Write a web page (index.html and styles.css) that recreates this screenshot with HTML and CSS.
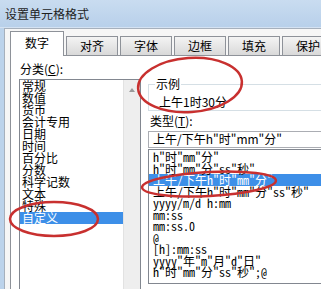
FILE: index.html
```html
<!DOCTYPE html>
<html lang="zh-CN">
<head>
	<meta charset="UTF-8">
	<title>设置单元格格式</title>
	<link rel="stylesheet" href="styles.css">
</head>
<body>
	<div class="window">
		<div class="titlebar">设置单元格格式</div>

		<div class="frame">
			<div class="tabs">
				<div class="tab active">数字</div>
				<div class="tab">对齐</div>
				<div class="tab">字体</div>
				<div class="tab">边框</div>
				<div class="tab">填充</div>
				<div class="tab">保护</div>
			</div>

			<div class="panel">
				<div class="left">
					<div class="label">分类(<span class="key">C</span>):</div>
					<div class="catlist">
						<ul class="cats">
							<li>常规</li>
							<li>数值</li>
							<li>货币</li>
							<li>会计专用</li>
							<li>日期</li>
							<li>时间</li>
							<li>百分比</li>
							<li>分数</li>
							<li>科学记数</li>
							<li>文本</li>
							<li>特殊</li>
							<li class="selected">自定义</li>
						</ul>
						<div class="scrollbar"><span class="arrow"></span></div>
					</div>
				</div>

				<div class="right">
					<fieldset class="sample">
						<legend>示例</legend>
						<div class="sample-value">上午1时30分</div>
					</fieldset>
					<div class="label type-label">类型(<span class="key">T</span>):</div>
					<div class="typebox">上午/下午h"时"mm"分"</div>
					<ul class="types">
						<li>h"时"mm"分"</li>
						<li>h"时"mm"分"ss"秒"</li>
						<li class="selected">上午/下午h"时"mm"分"</li>
						<li>上午/下午h"时"mm"分"ss"秒"</li>
						<li>yyyy/m/d h:mm</li>
						<li>mm:ss</li>
						<li>mm:ss.0</li>
						<li>@</li>
						<li>[h]:mm:ss</li>
						<li>yyyy"年"m"月"d"日"</li>
						<li>h"时"mm"分"ss"秒";@</li>
					</ul>
				</div>
			</div>
		</div>

		<!-- red marks drawn over the screenshot -->
		<svg class="marks" width="321" height="289" viewBox="0 0 321 289">
			<ellipse cx="190" cy="85" rx="52" ry="27" transform="rotate(-4 190 85)"/>
			<ellipse cx="209" cy="184" rx="67" ry="12" transform="rotate(-3 209 184)"/>
			<ellipse cx="54" cy="219" rx="44" ry="17"/>
		</svg>
	</div>
</body>
</html>
```

FILE: styles.css
```css
html, body, div, span, ul, li, fieldset, legend {
	margin: 0;
	padding: 0;
	border: 0;
}
ul {
	list-style: none;
}
body {
	background: #ffffff;
	font-family: "Noto Sans CJK SC", "Liberation Sans", sans-serif;
	font-size: 12px;
	color: #000;
}

.window {
	position: relative;
	width: 321px;
	height: 289px;
	overflow: hidden;
	background: #bcd3eb;
}

.titlebar {
	height: 27px;
	line-height: 28px;
	padding-left: 5px;
	color: #1e1e1e;
	background: linear-gradient(#c9dcf0, #b8d0ea);
	border-bottom: 1px solid #d4e2f2;
}

.frame {
	margin-left: 4px;
	height: 261px;
	padding: 3px 0 0 5px;
	background: #f6f6f6;
	border-top: 1px solid #a6b0bc;
	border-left: 1px solid #a6b0bc;
}

/* tabs */
.tabs {
	display: flex;
	align-items: flex-end;
	gap: 2px;
	height: 23px;
	width: 340px;
}
.tab {
	width: 50px;
	height: 18px;
	line-height: 18px;
	text-align: center;
	border: 1px solid #8e9299;
	border-bottom: none;
	background: linear-gradient(#f4f4f4, #d9d9d9);
}
.tab.active {
	position: relative;
	z-index: 1;
	width: 52px;
	height: 24px;
	line-height: 22px;
	margin-bottom: -1px;
	background: #ffffff;
}

.panel {
	display: flex;
	width: 400px;
	height: 240px;
	background: #ffffff;
	border: 1px solid #8e9299;
}

.label {
	height: 14px;
	line-height: 14px;
}
.key {
	text-decoration: underline;
}

/* category list */
.left {
	padding-left: 8px;
}
.left .label {
	margin-top: 6px;
	padding-left: 1px;
}
.catlist {
	display: flex;
	width: 120px;
	height: 220px;
	margin-top: 3px;
	border: 1px solid #828790;
}
.cats {
	flex: 1;
}
.cats li {
	height: 12px;
	line-height: 12px;
	padding-left: 2px;
	white-space: nowrap;
}
.cats li.selected {
	background: #3d8fe8;
	color: #ffffff;
}
.scrollbar {
	width: 16px;
	background: #eeeeee;
	border-left: 1px solid #e2e2e2;
}
.arrow {
	display: block;
	width: 0;
	height: 0;
	margin: 8px auto 0;
	border-left: 3px solid transparent;
	border-right: 3px solid transparent;
	border-bottom: 4px solid #9a9a9a;
}

/* type side */
.right {
	padding-left: 7px;
	flex: 1;
}
.sample {
	margin-top: 22px;
	padding: 0 0 2px 10px;
	border: 1px solid #d5dfe5;
}
.sample legend {
	margin-left: -4px;
	padding: 0 1px;
	line-height: 12px;
}
.sample-value {
	margin-top: 6px;
	line-height: 12px;
}
.type-label {
	margin-top: 3px;
	padding-left: 2px;
}
.typebox {
	margin-top: 3px;
	padding: 1px 4px 2px;
	line-height: 12px;
	white-space: nowrap;
	border: 1px solid #abadb3;
}
.types {
	margin-top: 1px;
	height: 132px;
	padding-top: 1px;
	border: 1px solid #828790;
	font-family: "Noto Sans Mono CJK SC", "Noto Sans CJK SC", monospace;
}
.types li {
	height: 11.5px;
	line-height: 11.5px;
	padding-left: 4px;
	white-space: nowrap;
}
.types li.selected {
	background: #3d8fe8;
	color: #ffffff;
}

/* overlay */
.marks {
	position: absolute;
	left: 0;
	top: 0;
}
.marks ellipse {
	fill: none;
	stroke: #c8302f;
	stroke-width: 2.5;
}
```
